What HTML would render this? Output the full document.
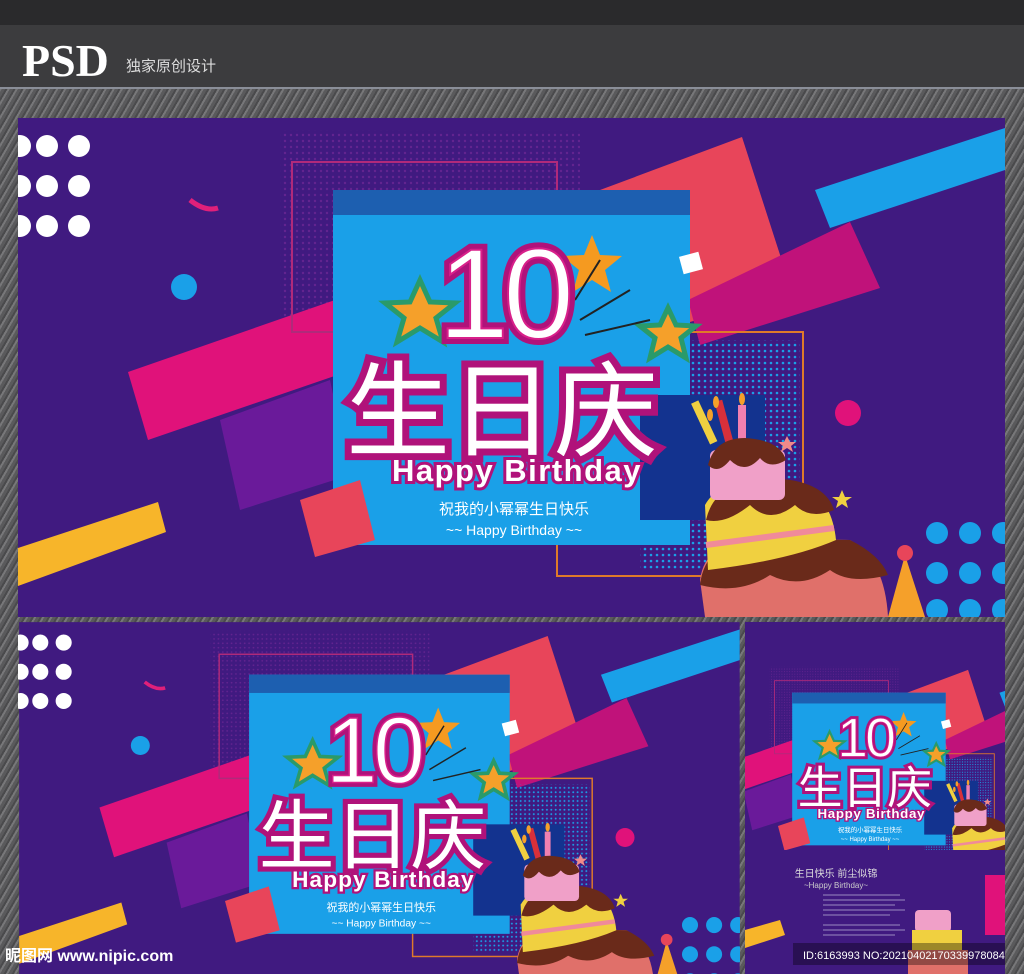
<!DOCTYPE html>
<html><head><meta charset="utf-8"><style>
html,body{margin:0;padding:0;width:1024px;height:974px;overflow:hidden;
background:#5e5e60 repeating-linear-gradient(120deg,#4a4a4c 0 2px,#777779 2px 4px,#5a5a5c 4px 7px);}
svg{position:absolute;left:0;top:0}
</style></head><body>
<svg width="1024" height="974" viewBox="0 0 1024 974" xmlns="http://www.w3.org/2000/svg" font-family="'Liberation Sans','Noto Sans CJK SC',sans-serif">
<defs>
<clipPath id="c1"><rect x="18" y="118" width="987" height="499"/></clipPath>
<clipPath id="c2"><rect x="18" y="622" width="722" height="352"/></clipPath>
<clipPath id="c3"><rect x="745" y="622" width="260" height="352"/></clipPath>
<pattern id="ht" width="6" height="6" patternUnits="userSpaceOnUse"><circle cx="3" cy="3" r="1.3" fill="#1aa0e8"/></pattern>
<pattern id="hp" width="6" height="6" patternUnits="userSpaceOnUse"><circle cx="3" cy="3" r="1.2" fill="#7a2a9a"/></pattern>
<g id="poster">
<rect x="18" y="118" width="987" height="499" fill="#401a80"/>
<rect x="280" y="130" width="300" height="200" fill="url(#hp)" opacity="0.6"/>
<g fill="#fff"><circle cx="20" cy="146" r="11"/><circle cx="47" cy="146" r="11"/><circle cx="79" cy="146" r="11"/>
<circle cx="20" cy="186" r="11"/><circle cx="47" cy="186" r="11"/><circle cx="79" cy="186" r="11"/>
<circle cx="20" cy="226" r="11"/><circle cx="47" cy="226" r="11"/><circle cx="79" cy="226" r="11"/></g>
<path d="M190 200 Q205 212 218 208" stroke="#e0207a" stroke-width="5" fill="none"/>
<circle cx="184" cy="287" r="13" fill="#1aa0e8"/>
<polygon points="220,420 330,380 350,475 240,510" fill="#6a1a9a"/>
<polygon points="128,372 335,300 352,370 148,440" fill="#e0127a"/>
<polygon points="18,548 158,502 166,532 18,586" fill="#f7b52a"/>
<polygon points="600,190 742,137 792,292 690,322" fill="#e8455a"/>
<polygon points="688,300 850,222 880,288 700,345" fill="#c0127a"/>
<polygon points="815,190 1005,128 1005,170 830,228" fill="#1aa0e8"/>
<rect x="292" y="162" width="265" height="170" fill="none" stroke="#b02a7a" stroke-width="2"/>
<rect x="640" y="340" width="160" height="230" fill="url(#ht)"/>
<rect x="557" y="332" width="246" height="244" fill="none" stroke="#e07a2a" stroke-width="2"/>
<rect x="333" y="190" width="357" height="355" fill="#1aa0e8"/>
<rect x="333" y="190" width="357" height="25" fill="#1d5fb0"/>
<rect x="640" y="395" width="125" height="125" fill="#13338f"/>
<polygon points="300,500 360,480 375,540 315,557" fill="#e8455a"/>
<rect x="681" y="254" width="20" height="18" fill="#fff" transform="rotate(-15 691 263)"/>
<circle cx="848" cy="413" r="13" fill="#e0127a"/>
<g fill="#1aa0e8"><circle cx="937" cy="533" r="11"/><circle cx="970" cy="533" r="11"/><circle cx="1003" cy="533" r="11"/>
<circle cx="937" cy="573" r="11"/><circle cx="970" cy="573" r="11"/><circle cx="1003" cy="573" r="11"/>
<circle cx="937" cy="610" r="11"/><circle cx="970" cy="610" r="11"/><circle cx="1003" cy="610" r="11"/></g>
<polygon points="420,280 430,302 455,303 436,318 443,342 420,328 397,342 404,318 385,303 410,302" fill="#f5a02a" stroke="#2a9a6a" stroke-width="5"/>
<polygon points="668,308 676,325 696,326 681,338 686,358 668,347 650,358 655,338 640,326 660,325" fill="#f5a02a" stroke="#2a9a6a" stroke-width="5"/>
<polygon points="592,235 600,255 622,256 605,270 611,292 592,280 573,292 579,270 562,256 584,255" fill="#f59a20"/>
<path d="M575 300 L600 260 M580 320 L630 290 M585 335 L650 320" stroke="#222" stroke-width="2"/>
<text x="503" y="338" text-anchor="middle" font-size="128" fill="#fff" stroke="#b0127a" stroke-width="12" paint-order="stroke" letter-spacing="-6">10</text>
<text x="503" y="338" text-anchor="middle" font-size="128" fill="none" stroke="#d8208a" stroke-width="2" letter-spacing="-6">10</text>
<text x="502" y="448" text-anchor="middle" font-size="104" fill="#fff" stroke="#b0127a" stroke-width="14" paint-order="stroke">生日庆</text>
<text x="517" y="481" text-anchor="middle" font-size="31" font-weight="bold" letter-spacing="1.5" fill="#fff" stroke="#b0127a" stroke-width="6" paint-order="stroke">Happy Birthday</text>
<text x="514" y="514" text-anchor="middle" font-size="15" fill="#fff">祝我的小幂幂生日快乐</text>
<text x="514" y="535" text-anchor="middle" font-size="14" fill="#fff">~~ Happy Birthday ~~</text>
<rect x="700" y="400" width="8" height="45" fill="#f0d040" transform="rotate(-25 704 422)"/>
<rect x="720" y="400" width="8" height="45" fill="#d8303a" transform="rotate(-15 724 422)"/>
<rect x="738" y="405" width="8" height="40" fill="#f080b0"/>
<ellipse cx="710" cy="415" rx="3" ry="6" fill="#f5a02a"/><ellipse cx="716" cy="402" rx="3" ry="6" fill="#f5a02a"/><ellipse cx="742" cy="399" rx="3" ry="6" fill="#f5a02a"/>
<path d="M705 617 L700 580 Q705 540 760 538 L850 540 Q885 560 888 617 Z" fill="#e0706a"/>
<path d="M700 585 Q705 540 760 538 L850 540 Q880 555 888 575 Q850 585 830 570 Q800 590 770 575 Q740 595 700 585Z" fill="#6a2a1a"/>
<path d="M708 570 L705 505 Q720 478 770 478 Q830 480 836 540 Q790 560 708 570Z" fill="#f0d040"/>
<path d="M706 520 Q715 480 770 478 Q825 480 834 510 Q810 520 795 505 Q770 525 750 505 Q725 525 706 520Z" fill="#6a2a1a"/>
<path d="M706 545 L834 528" stroke="#f08a9a" stroke-width="6"/>
<rect x="710" y="450" width="75" height="50" rx="6" fill="#f0a0c8"/>
<path d="M708 465 Q715 438 745 438 Q780 440 786 460 Q770 470 760 458 Q745 475 730 460 Q718 475 708 465Z" fill="#6a2a1a"/>
<polygon points="888,617 905,555 925,617" fill="#f5a02a"/>
<circle cx="905" cy="553" r="8" fill="#e8455a"/>
<polygon points="842,490 845,497 852,497 846,501 848,508 842,504 836,508 838,501 832,497 839,497" fill="#f0d040"/>
<polygon points="787,436 790,442 796,442 791,446 793,452 787,448 781,452 783,446 778,442 784,442" fill="#f08a8a"/>
</g>
</defs>

<rect x="0" y="0" width="1024" height="25" fill="#2a2a2c"/>
<rect x="0" y="25" width="1024" height="63" fill="#3c3c3e"/>
<rect x="0" y="87" width="1024" height="2" fill="#8a8e98"/>
<text x="22" y="76" font-family="'Liberation Serif',serif" font-size="46" font-weight="bold" fill="#fff">PSD</text>
<text x="126" y="71" font-size="15" fill="#ddd">独家原创设计</text>

<use href="#poster" clip-path="url(#c1)"/>
<g clip-path="url(#c2)"><use href="#poster" transform="translate(6 536) scale(0.73)"/></g>
<g clip-path="url(#c3)">
<rect x="745" y="622" width="260" height="352" fill="#401a80"/>
<use href="#poster" transform="translate(649 611) scale(0.43)"/>
<rect x="745" y="850" width="260" height="124" fill="#401a80"/>
<rect x="985" y="875" width="20" height="60" fill="#e0127a"/>
<polygon points="745,930 780,920 785,935 745,948" fill="#f7b52a"/>
<text x="836" y="877" text-anchor="middle" font-size="10" fill="#ddd">生日快乐 前尘似锦</text>
<text x="836" y="888" text-anchor="middle" font-size="8" fill="#ccc">~Happy Birthday~</text>
<g stroke="#9a8ac0" stroke-width="1"><path d="M823 895 H900 M823 900 H905 M823 905 H895 M823 910 H905 M823 915 H890 M823 925 H900 M823 930 H905 M823 935 H895"/></g>
<rect x="905" y="900" width="55" height="74" fill="#401a80"/>
<rect x="915" y="910" width="36" height="22" rx="4" fill="#f0a0c8"/>
<rect x="912" y="930" width="50" height="20" fill="#f0d040"/>
<rect x="908" y="950" width="60" height="24" fill="#e0706a"/>
</g>
<rect x="793" y="943" width="212" height="22" fill="#000" opacity="0.35"/>
<text x="803" y="959" font-size="11" fill="#fff">ID:6163993 NO:20210402170339978084</text>
<text x="5" y="961" font-size="16" font-weight="bold" fill="#fff">昵图网 www.nipic.com</text>
</svg>
</body></html>
